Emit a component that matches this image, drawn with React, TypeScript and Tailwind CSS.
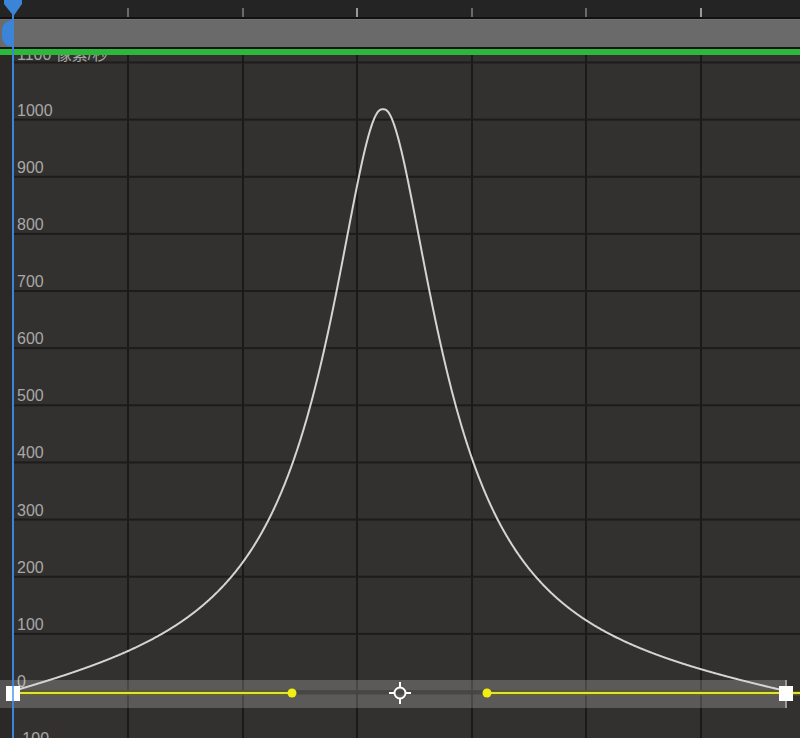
import React from 'react';

const GRID_X = [128, 243, 357, 472, 586, 701];
const ZERO_Y = 691;
const PX_PER_UNIT = 0.5714;
const PEAK_X = 383;
const LEFT_X = 13;
const RIGHT_X = 786;

const valueToY = (v: number) => ZERO_Y - v * PX_PER_UNIT;

// speed curve: sharp peak, long tails falling to 0 at both keyframes
function speedAt(x: number) {
  const d = Math.abs(x - PEAK_X);
  const eps = 2.5;
  const de = Math.sqrt(d * d + eps * eps) - eps;
  const base = (dd: number) => 1018 / (1 + Math.pow(dd / 69, 1.76));
  const span = x < PEAK_X ? PEAK_X - LEFT_X : RIGHT_X - PEAK_X;
  const endDe = Math.sqrt(span * span + eps * eps) - eps;
  const endV = base(endDe);
  return base(de) - endV * Math.pow(d / span, 2);
}

function curvePath() {
  const pts: string[] = [];
  for (let x = LEFT_X; x <= RIGHT_X; x += 0.5) {
    pts.push(`${x === LEFT_X ? 'M' : 'L'}${x},${valueToY(Math.max(0, speedAt(x))).toFixed(2)}`);
  }
  return pts.join(' ');
}

const labels = [1000, 900, 800, 700, 600, 500, 400, 300, 200, 100, 0, -100];

function Ruler() {
  return (
    <svg width="800" height="17" className="block">
      <rect width="800" height="17" fill="#242424" />
      {GRID_X.map((x, i) => (
        <rect key={x} x={x - 1} y={8} width={2} height={9} fill={i === 2 || i === 5 ? '#9a9a9a' : '#6a6a6a'} />
      ))}
    </svg>
  );
}

function Graph() {
  const lines: number[] = [];
  for (let k = -1; k <= 11; k++) lines.push(valueToY(k * 100));
  return (
    <svg width="800" height="683" viewBox="0 55 800 683" className="block">
      <rect x="0" y="55" width="800" height="683" fill="#33312f" />
      <rect x="0" y="55" width="12" height="683" fill="#2a2927" />
      {GRID_X.map((x) => (
        <rect key={x} x={x - 1} y={55} width={2} height={683} fill="#1a1a1a" />
      ))}
      {lines.map((y) => (
        <rect key={y} x={14} y={y - 1} width={786} height={2} fill="#1c1c1c" />
      ))}
      <text x="17" y="60" fill="#a8a8a8" fontSize="16" fontFamily="'Liberation Sans', 'Noto Sans CJK SC', sans-serif">
        1100 像素/秒
      </text>
      {labels.map((v) => (
        <text key={v} x="17" y={valueToY(v) - 4} fill="#a8a8a8" fontSize="16" fontFamily="'Liberation Sans', sans-serif">
          {v}
        </text>
      ))}

      {/* value band with keyframe handles */}
      <rect x="0" y="680" width={RIGHT_X} height="28" fill="#ffffff" fillOpacity="0.2" />
      <rect x="14" y="691.5" width={RIGHT_X - 14} height="3" fill="#3f3f3f" fillOpacity="0.7" />
      <rect x={RIGHT_X - 1} y="680" width="2" height="28" fill="#9a9a9a" />

      <path d={curvePath()} fill="none" stroke="#d4d4d4" strokeWidth="2" strokeLinejoin="round" />

      <line x1="14" y1="693" x2="292" y2="693" stroke="#6e6e14" strokeWidth="5" strokeOpacity="0.6" />
      <line x1="487" y1="693" x2="800" y2="693" stroke="#6e6e14" strokeWidth="5" strokeOpacity="0.6" />
      <line x1="14" y1="693" x2="292" y2="693" stroke="#e2e23a" strokeWidth="2" />
      <line x1="487" y1="693" x2="800" y2="693" stroke="#e2e23a" strokeWidth="2" />
      <circle cx="292" cy="693" r="4.5" fill="#f2ee10" />
      <circle cx="487" cy="693" r="4.5" fill="#f2ee10" />

      <g stroke="#ffffff" strokeWidth="2" fill="none">
        <circle cx="400" cy="693" r="5.5" />
        <line x1="389" y1="693" x2="394" y2="693" />
        <line x1="406" y1="693" x2="411" y2="693" />
        <line x1="400" y1="682" x2="400" y2="687" />
        <line x1="400" y1="699" x2="400" y2="704" />
      </g>

      <rect x="6" y="686" width="14" height="15" fill="#ffffff" />
      <rect x={RIGHT_X - 7} y="686" width="14" height="15" fill="#ffffff" />
    </svg>
  );
}

export default function App() {
  return (
    <div className="relative w-[800px] h-[738px] overflow-hidden bg-[#33312f] flex flex-col font-['Liberation_Sans',sans-serif]">
      <Ruler />
      <div className="h-[2px] bg-[#111111]" />
      <div className="h-[28px] bg-[#6a6a6a] flex border-t border-[#727272]">
        <div className="ml-[2px] w-[10px] h-full bg-[#3b84d8] rounded-l-full" />
      </div>
      <div className="h-[2px] bg-[#151515]" />
      <div className="h-[6px] bg-[#2eb83b]" />
      <Graph />

      {/* playhead */}
      <svg width="24" height="738" className="absolute left-0 top-0 pointer-events-none">
        <rect x="12" y="0" width="2" height="738" fill="#3b84d8" />
        <path d="M4,0 L22,0 L22,4 L13.5,16 L4,4 Z" fill="#3b84d8" />
        <rect x="12" y="686" width="2" height="15" fill="#9cc4f0" fillOpacity="0.7" />
      </svg>
    </div>
  );
}
